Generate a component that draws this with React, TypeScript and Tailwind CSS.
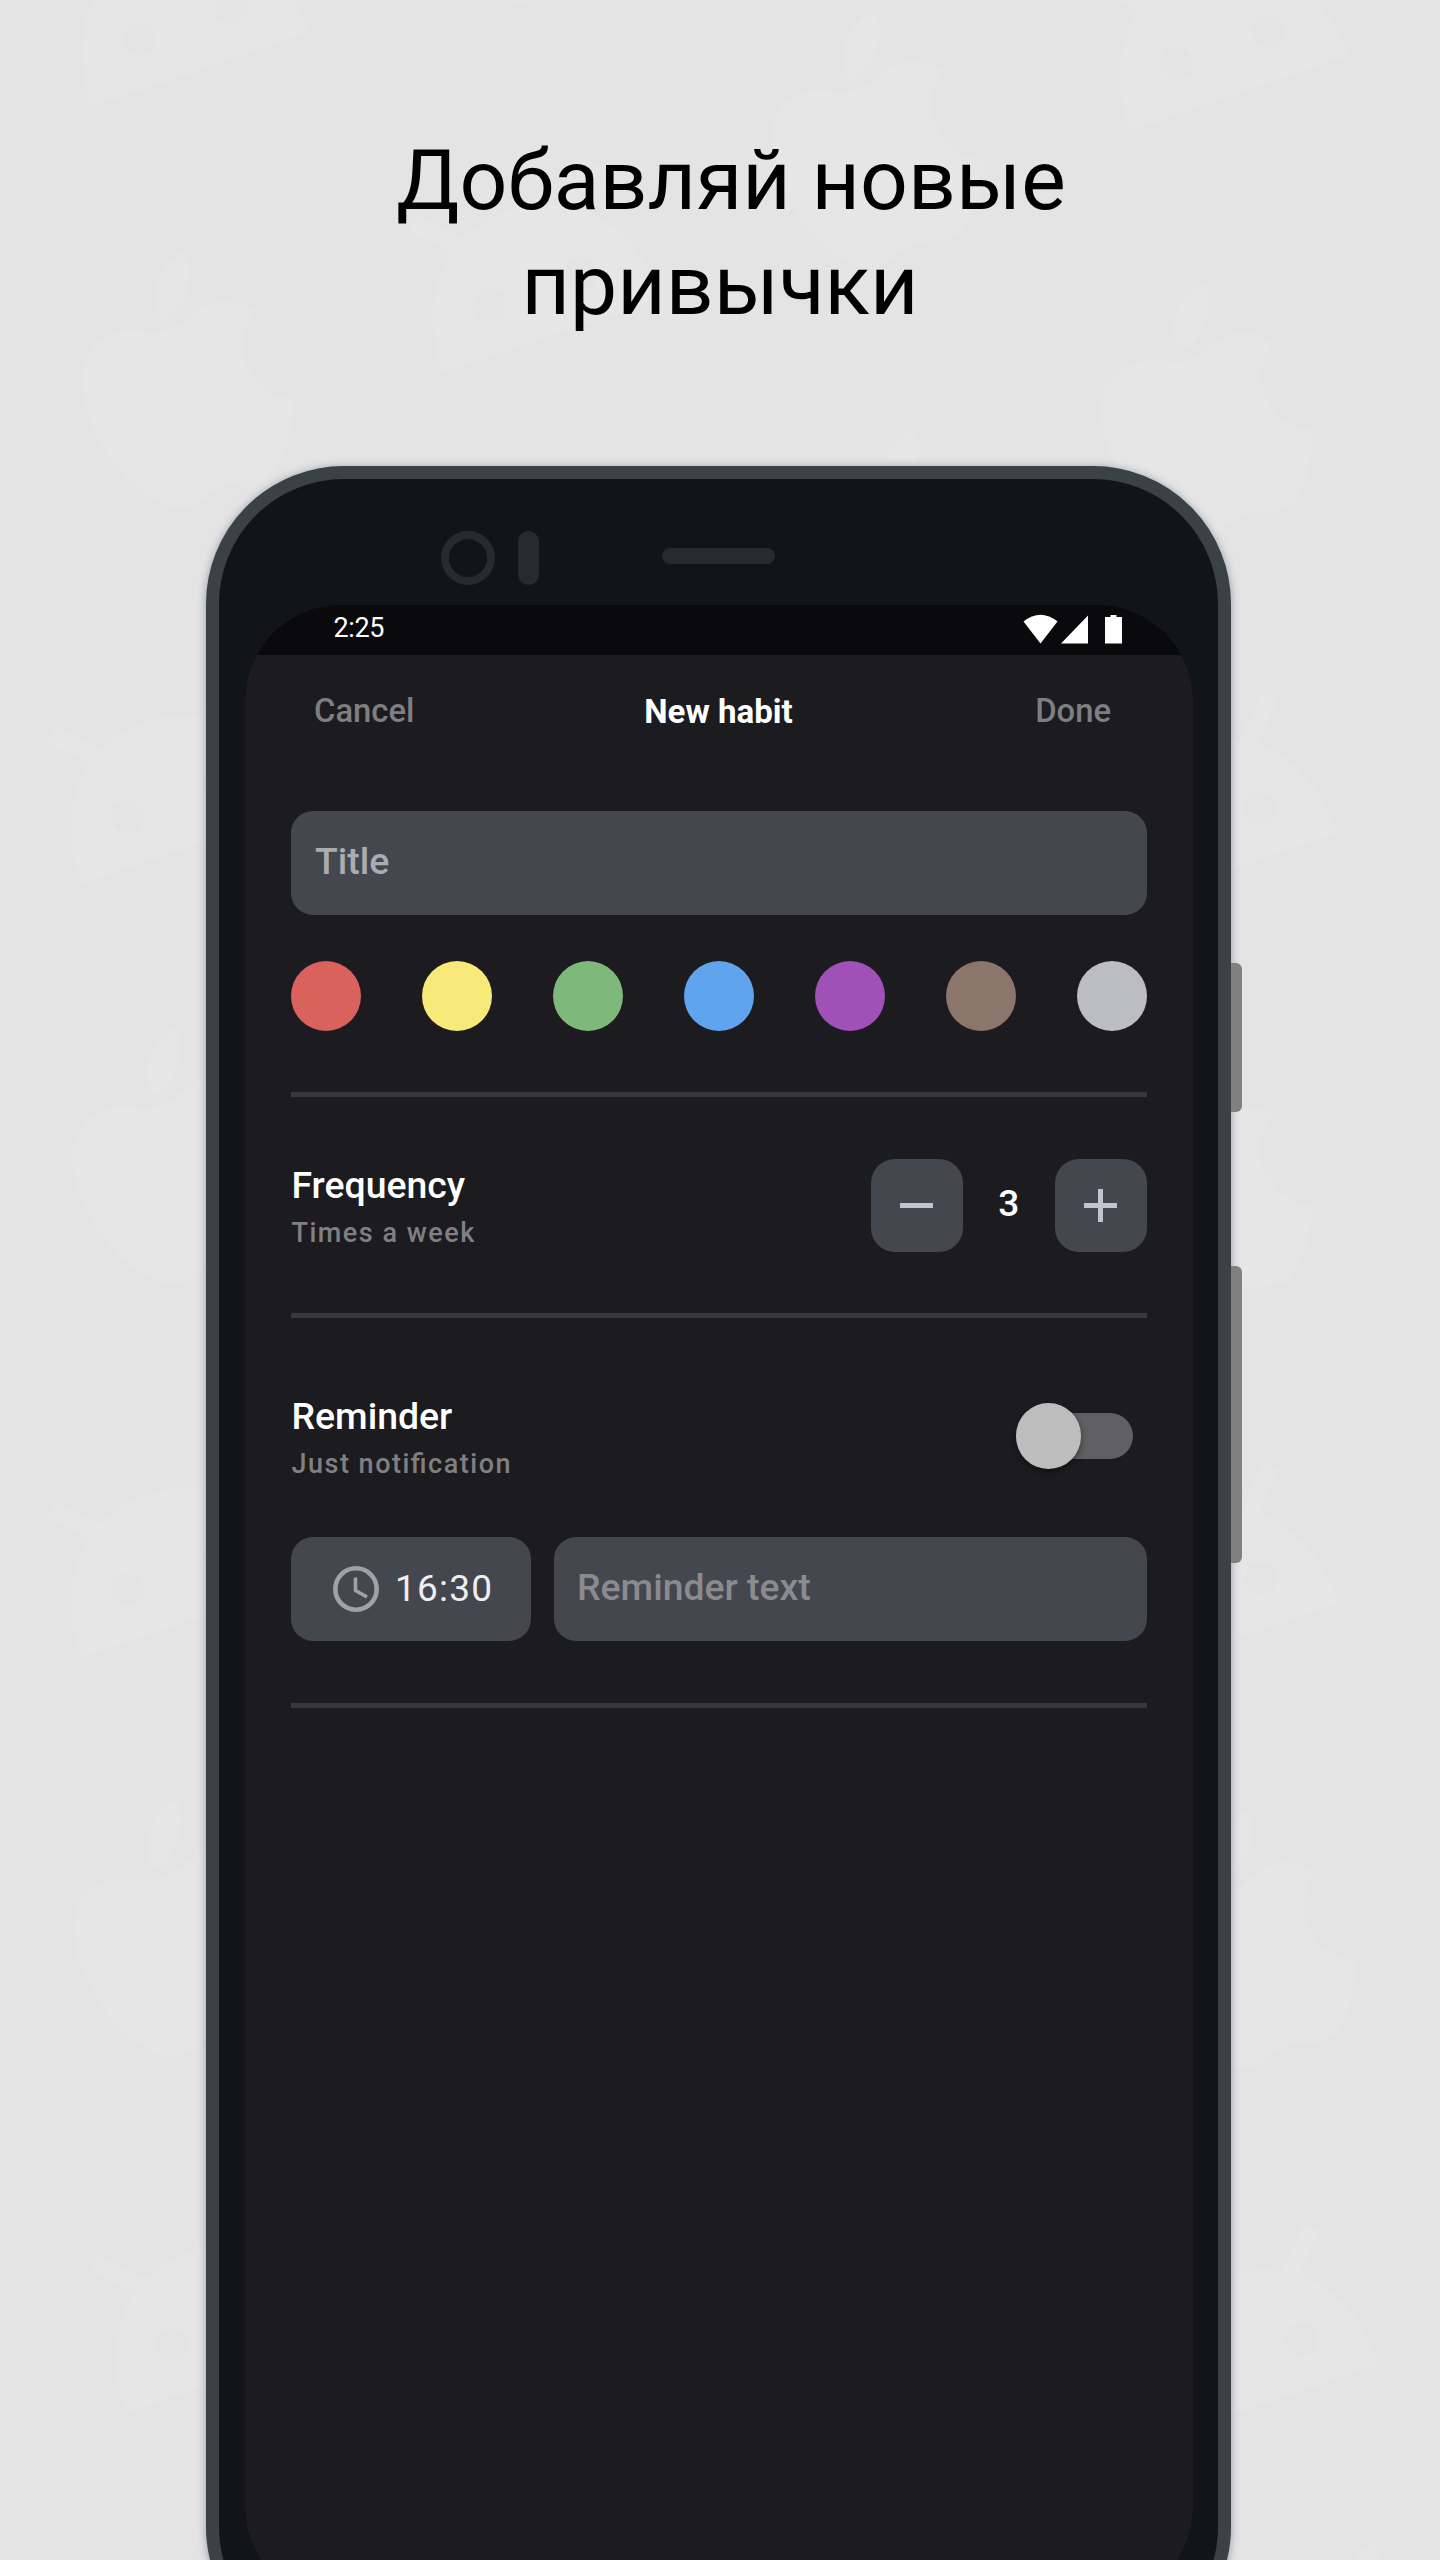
import React from "react";

const APPLES = [
  [-689, 240], [0, 0], [330, 271], [-698, 1016], [329, 1045],
  [-697, 1789], [373, 1801], [500, 2531], [-350, -265], [40, 418],
];

const ROBOTS = [
  [92, 107], [1130, 131], [443, 373], [81, 884], [1120, 908],
  [81, 1658], [1122, 1678], [126, 2413], [1162, 2439],
];

const SWATCHES = [
  "bg-[#d9625c]", "bg-[#f7ea78]", "bg-[#7eb87a]", "bg-[#60a4ee]",
  "bg-[#9f51b8]", "bg-[#8c756b]", "bg-[#bcbdbf]",
];

function Pattern() {
  return (
    <svg className="absolute inset-0" width="1440" height="2560" viewBox="0 0 1440 2560" fill="#e6e6e6">
      {APPLES.map(([x, y]) => (
        <g key={`a${x}-${y}`} transform={`translate(${x} ${y})`}>
          <path d="M875 10C884 34 878 68 850 80C835 52 849 22 875 10Z" />
          <path d="M857 90C878 84 886 61 912 61C924 61 935 65 944 71C930 88 928 108 935 124C944 145 962 158 983 160C983 187 974 226 955 238C944 243 931 240 918 243C897 247 893 268 868 268C832 268 771 200 771 140C771 112 788 97 805 92C822 88 838 93 857 90Z" />
        </g>
      ))}
      {ROBOTS.map(([x, y]) => (
        <g key={`r${x}-${y}`} transform={`translate(${x} ${y}) rotate(-19)`}>
          <path
            fillRule="evenodd"
            d="M0 0C0 -52 20 -90 47 -111L13 -145L26 -157L63 -120C94 -137 136 -137 167 -120L204 -157L217 -145L183 -111C210 -90 230 -52 230 0ZM49.500 -49a16.500 16.500 0 1 0 33 0a16.500 16.500 0 1 0 -33 0ZM147.500 -49a16.500 16.500 0 1 0 33 0a16.500 16.500 0 1 0 -33 0Z"
          />
        </g>
      ))}
    </svg>
  );
}

function StatusBar() {
  return (
    <div className="flex h-[50px] items-center justify-between pl-[88.5px] pr-[70px]">
      <span className="mt-[-5px] text-[27px] leading-[36px] tracking-[-0.4px] text-white">2:25</span>
      <svg className="mt-[-3px]" width="100" height="30" viewBox="0 0 100 30" fill="#fff">
        <path d="M0.500 7.500Q17.500 -6 34.500 7.500L17.500 29.500Z" />
        <path d="M38 29.500H65V1.500Z" />
        <path d="M82 3H87.500V1H93.500V3H99V29.500H82Z" />
      </svg>
    </div>
  );
}

function Divider() {
  return <div className="h-[5px] bg-[#38383a]" />;
}

function Label({ title, sub }: { title: string; sub: string }) {
  return (
    <div className="flex flex-col pl-[0.5px]">
      <span className="text-[37.4px] font-medium leading-[48px] text-white">{title}</span>
      <span className="text-[27px] font-medium leading-[48px] tracking-[1.5px] text-[#808082] [font-feature-settings:'liga']">
        {sub}
      </span>
    </div>
  );
}

function StepButton({ plus }: { plus?: boolean }) {
  return (
    <button className="flex h-[93px] w-[92.5px] items-center justify-center rounded-[24px] bg-[#45474e]">
      <svg width="33" height="33" viewBox="0 0 33 33" stroke="#c2c4d0" strokeWidth="5">
        <path d={plus ? "M0 16.500H33M16.500 0V33" : "M0 16.500H33"} />
      </svg>
    </button>
  );
}

function Sheet() {
  return (
    <div className="h-[1948px] rounded-t-[10px] bg-[#1c1b1f]">
      <div className="grid h-[113px] grid-cols-3 items-center text-[32.8px] font-medium">
        <span className="pl-[69px] text-[#7f7e81]">Cancel</span>
        <span className="pr-[1px] text-center text-[33.1px] font-bold text-white">New habit</span>
        <span className="pr-[82px] text-right text-[#7f7e81]">Done</span>
      </div>
      <div className="px-[46px] pt-[43px]">
        <div className="flex h-[104px] items-center rounded-[22px] bg-[#45474e] px-[24px] pb-[4px] text-[37.4px] font-medium text-[#acacb0]">
          Title
        </div>
        <div className="mb-[61px] mt-[46px] flex h-[70px] justify-between">
          {SWATCHES.map((c) => (
            <div key={c} className={`h-[69.5px] w-[69.5px] rounded-full ${c}`} />
          ))}
        </div>
        <Divider />
        <div className="flex h-[216px] items-center justify-between">
          <div className="pt-[8px]">
            <Label title="Frequency" sub="Times a week" />
          </div>
          <div className="flex items-center">
            <StepButton />
            <span className="w-[91.5px] pb-[3px] text-center text-[37px] font-medium text-white">3</span>
            <StepButton plus />
          </div>
        </div>
        <Divider />
        <div className="flex items-start justify-between pt-[74px]">
          <Label title="Reminder" sub="Just notification" />
          <div className="mr-[14px] mt-[21px] flex h-[46px] w-[110px] items-center rounded-full bg-[#606062]">
            <div className="ml-[-7.5px] h-[65.5px] w-[65.5px] shrink-0 rounded-full bg-[#bdbdbd] shadow-[0_3px_6px_rgba(0,0,0,0.45)]" />
          </div>
        </div>
        <div className="mb-[62px] mt-[49px] flex gap-[23px]">
          <div className="flex h-[104px] w-[240px] items-center rounded-[22px] bg-[#45474e] pl-[42px]">
            <svg width="46" height="46" viewBox="0 0 46 46" fill="none" stroke="#a2a2a6">
              <circle cx="23" cy="23" r="20.700" strokeWidth="4.600" />
              <path d="M22.500 11.500V24.500L34 31" strokeWidth="3.600" />
            </svg>
            <span className="ml-[16px] text-[37px] tracking-[1.2px] text-[#eeeeee]">16:30</span>
          </div>
          <div className="flex h-[104px] flex-1 items-center rounded-[22px] bg-[#45474e] px-[23px] pb-[4px] text-[37.4px] font-medium text-[#8a8b8f]">
            Reminder text
          </div>
        </div>
        <Divider />
      </div>
    </div>
  );
}

export default function App() {
  return (
    <div className="relative h-[2560px] w-[1440px] overflow-hidden bg-[#e4e4e4] font-['Roboto',sans-serif]">
      <Pattern />
      <div className="relative pt-[128px]">
        <h1 className="flex flex-col text-center text-[84px] leading-[105px] text-black">
          <span className="pl-[22px]">Добавляй новые</span>
          <span>привычки</span>
        </h1>
        <div className="mt-[128px] flex pl-[206px]">
          <div className="h-[2199px] w-[1025px] rounded-[138px] border-[13px] border-[#3a4245] bg-[#111515] px-[26px] shadow-[0_1px_8px_rgba(80,90,130,0.55)]">
            <div className="flex h-[126px] items-start pl-[196px] pt-[52px]">
              <div className="h-[54px] w-[54px] rounded-full border-[8px] border-[#262b2d]" />
              <div className="ml-[23px] h-[54px] w-[21px] rounded-full bg-[#262b2d]" />
              <div className="ml-[123px] mt-[17px] h-[16px] w-[113px] rounded-full bg-[#262b2d]" />
            </div>
            <div className="h-[1998px] w-[948px] overflow-hidden rounded-[96px] bg-[#0a0a0c]">
              <StatusBar />
              <Sheet />
            </div>
          </div>
          <div className="flex w-[11px] flex-col pt-[497px]">
            <div className="h-[149px] rounded-r-[6px] bg-[#808080]" />
            <div className="mt-[154px] h-[297px] rounded-r-[6px] bg-[#808080]" />
          </div>
        </div>
      </div>
    </div>
  );
}
